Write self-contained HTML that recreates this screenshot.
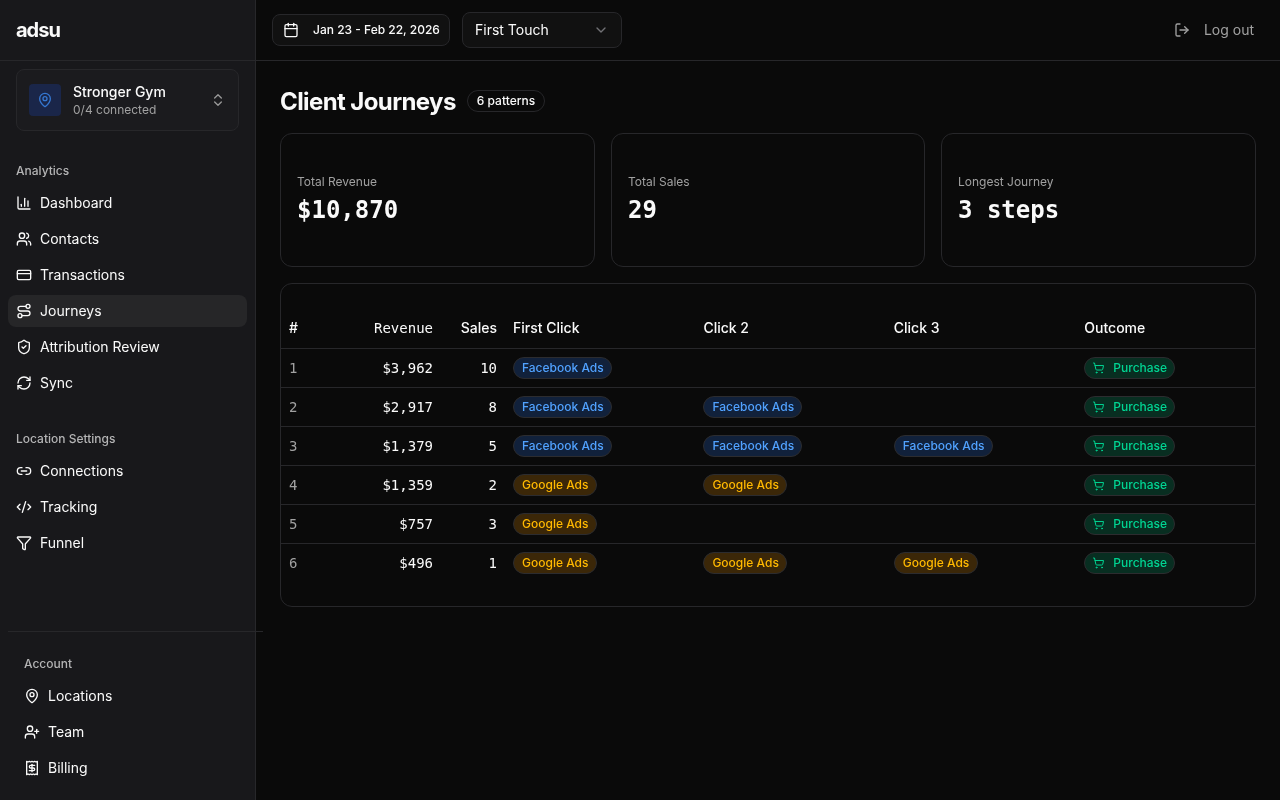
<!DOCTYPE html>
<html lang="en">
<head>
<meta charset="utf-8">
<title>adsu – Client Journeys</title>
<style>
*{box-sizing:border-box;margin:0;padding:0}
html,body{width:1280px;height:800px;overflow:hidden;background:#0a0a0a;color:#fafafa;
  font-family:"Inter","Liberation Sans",sans-serif;font-size:14px;-webkit-font-smoothing:antialiased;font-size-adjust:0.5459}
svg{display:block;fill:none;stroke:currentColor;stroke-width:2;stroke-linecap:round;stroke-linejoin:round}
.mono{font-family:"DejaVu Sans Mono","Liberation Mono",monospace;font-size-adjust:none}
#root{position:absolute;left:0;top:0;width:1280px;height:800px;will-change:transform}
/* sidebar */
#sb{position:absolute;left:0;top:0;width:256px;height:800px;background:#18181b;border-right:1px solid #27272a}
#logo{position:absolute;left:16px;top:16px;height:28px;line-height:28px;font-size:20px;font-weight:700;letter-spacing:-1px}
#sbline{position:absolute;left:0;top:60px;width:255px;height:1px;background:#27272a}
#loc{position:absolute;left:16px;top:69px;width:223px;height:62px;border:1px solid #27272a;border-radius:8px;background:#1b1b1e}
#loc .ic{position:absolute;left:12px;top:14px;width:32px;height:32px;border-radius:4px;background:#1a2649;color:#3578d2;display:flex;align-items:center;justify-content:center}
#loc .t1{position:absolute;left:56px;top:12px;font-size:14px;font-weight:500;line-height:20px;white-space:nowrap}
#loc .t2{position:absolute;left:56px;top:32px;font-size:12px;line-height:16px;color:#a1a1a1;white-space:nowrap}
#loc .ch{position:absolute;left:193px;top:22px;color:#999999}
.lab{position:absolute;font-size:12px;font-weight:500;color:#b4b4b5;line-height:16px;white-space:nowrap}
.it{position:absolute;left:8px;width:239px;height:32px;border-radius:8px;display:flex;align-items:center;padding-left:8px;font-size:14px;line-height:20px;color:#fafafa;white-space:nowrap}
.it svg{width:16px;height:16px;margin-right:8px;flex:none}
.it.act{background:#262628}
.it.b{left:16px;width:223px}
#sep{position:absolute;left:8px;top:631px;width:255px;height:1px;background:#27272a}
/* header */
#hd{position:absolute;left:256px;top:0;width:1024px;height:61px;border-bottom:1px solid #27272a}
#date{position:absolute;left:16px;top:14px;width:178px;height:32px;border:1px solid #27272a;border-radius:8px;background:#111111;display:flex;align-items:center;padding-left:10px;font-size:12px;line-height:16px;font-weight:500;white-space:nowrap}
#date svg{width:16px;height:16px;margin-right:14px}
#sel{position:absolute;left:206px;top:12px;width:160px;height:36px;border:1px solid #27272a;border-radius:8px;background:#111111;display:flex;align-items:center;padding-left:12px;font-size:14px;line-height:20px;white-space:nowrap}
#sel svg{position:absolute;right:12px;top:9px;width:16px;height:16px;color:#717175}
#lo{position:absolute;right:26px;top:14px;height:32px;display:flex;align-items:center;font-size:14px;line-height:20px;color:#a1a1a1;white-space:nowrap}
#lo svg{width:16px;height:16px;margin-right:14px}
/* main */
#title{position:absolute;left:280px;top:86px;font-size:24px;font-weight:700;line-height:32px;letter-spacing:-0.6px;white-space:nowrap}
#pat{position:absolute;left:467px;top:90px;width:78px;height:22px;border:1px solid #27272a;border-radius:11px;font-size:12px;font-weight:500;line-height:16px;padding-top:2px;text-align:center;white-space:nowrap}
.card{position:absolute;top:133px;height:134px;border:1px solid #27272a;border-radius:12px;background:#0a0a0a}
.card .k{position:absolute;left:16px;top:40px;font-size:12px;line-height:16px;color:#a1a1a1;white-space:nowrap}
.card .v{position:absolute;left:16px;top:60px;font-size:24px;font-weight:700;line-height:32px;white-space:nowrap}
#tb{position:absolute;left:280px;top:283px;width:976px;height:324px;border:1px solid #27272a;border-radius:12px}
.row{position:absolute;left:0;width:974px;height:39px;border-top:1px solid #27272a}
.row>*{position:absolute;top:9px;height:20px;line-height:20px;font-size:14px;white-space:nowrap}
.hrow{position:absolute;left:0;top:24px;width:974px;height:40px}
.hrow>*{position:absolute;top:10px;height:20px;line-height:20px;font-size:14px;font-weight:500;white-space:nowrap}
.c0{left:8px;color:#a1a1a1}
.c1{right:822px;text-align:right}
.c2{right:758px;text-align:right}
.c3{left:232px}.c4{left:422.4px}.c5{left:612.8px}.c6{left:803.3px}
.bd{position:absolute;left:0;top:-1px;height:22px;line-height:16px;border-radius:11px;padding:2px 8px;border:1px solid #2c2c2f;font-size:12px;font-weight:500}
.fb{background:#11213b;color:#51a2ff;width:99px}
.ga{background:#3b2708;color:#ffb900;width:84px}
.pu{background:#082e21;color:#00d492;padding-left:28px;width:91px}
.pu svg{position:absolute;left:8px;top:4px;width:12px;height:12px}
</style>
</head>
<body>
<div id="root">
<div id="sb">
  <div id="logo">adsu</div>
  <div id="sbline"></div>
  <div id="loc">
    <div class="ic"><svg width="16" height="16" viewBox="0 0 24 24"><path d="M20 10c0 4.993-5.539 10.193-7.399 11.799a1 1 0 0 1-1.202 0C9.539 20.193 4 14.993 4 10a8 8 0 0 1 16 0"/><circle cx="12" cy="10" r="3"/></svg></div>
    <div class="t1">Stronger Gym</div>
    <div class="t2">0/4 connected</div>
    <div class="ch"><svg width="16" height="16" viewBox="0 0 24 24"><path d="m7 15 5 5 5-5"/><path d="m7 9 5-5 5 5"/></svg></div>
  </div>
  <div class="lab" style="left:16px;top:163px">Analytics</div>
  <div class="it" style="top:187px"><svg viewBox="0 0 24 24"><path d="M3 3v16a2 2 0 0 0 2 2h16"/><path d="M18 17V9"/><path d="M13 17V5"/><path d="M8 17v-3"/></svg>Dashboard</div>
  <div class="it" style="top:223px"><svg viewBox="0 0 24 24"><path d="M16 21v-2a4 4 0 0 0-4-4H6a4 4 0 0 0-4 4v2"/><circle cx="9" cy="7" r="4"/><path d="M22 21v-2a4 4 0 0 0-3-3.87"/><path d="M16 3.13a4 4 0 0 1 0 7.75"/></svg>Contacts</div>
  <div class="it" style="top:259px"><svg viewBox="0 0 24 24"><rect width="20" height="14" x="2" y="5" rx="2"/><line x1="2" x2="22" y1="10" y2="10"/></svg>Transactions</div>
  <div class="it act" style="top:295px"><svg viewBox="0 0 24 24"><circle cx="6" cy="19" r="3"/><path d="M9 19h8.5a3.5 3.5 0 0 0 0-7h-11a3.5 3.5 0 0 1 0-7H15"/><circle cx="18" cy="5" r="3"/></svg>Journeys</div>
  <div class="it" style="top:331px"><svg viewBox="0 0 24 24"><path d="M20 13c0 5-3.5 7.5-7.66 8.95a1 1 0 0 1-.67-.01C7.5 20.5 4 18 4 13V6a1 1 0 0 1 1-1c2 0 4.5-1.2 6.24-2.72a1.17 1.17 0 0 1 1.52 0C14.51 3.81 17 5 19 5a1 1 0 0 1 1 1z"/><path d="m9 12 2 2 4-4"/></svg>Attribution Review</div>
  <div class="it" style="top:367px"><svg viewBox="0 0 24 24"><path d="M3 12a9 9 0 0 1 9-9 9.75 9.75 0 0 1 6.74 2.74L21 8"/><path d="M21 3v5h-5"/><path d="M21 12a9 9 0 0 1-9 9 9.75 9.75 0 0 1-6.74-2.74L3 16"/><path d="M8 16H3v5"/></svg>Sync</div>
  <div class="lab" style="left:16px;top:431px">Location Settings</div>
  <div class="it" style="top:455px"><svg viewBox="0 0 24 24"><path d="M9 17H7A5 5 0 0 1 7 7h2"/><path d="M15 7h2a5 5 0 1 1 0 10h-2"/><line x1="8" x2="16" y1="12" y2="12"/></svg>Connections</div>
  <div class="it" style="top:491px"><svg viewBox="0 0 24 24"><path d="m18 16 4-4-4-4"/><path d="m6 8-4 4 4 4"/><path d="m14.5 4-5 16"/></svg>Tracking</div>
  <div class="it" style="top:527px"><svg viewBox="0 0 24 24"><path d="M10 20a1 1 0 0 0 .553.895l2 1A1 1 0 0 0 14 21v-7a2 2 0 0 1 .517-1.341L21.74 4.67A1 1 0 0 0 21 3H3a1 1 0 0 0-.742 1.67l7.225 7.989A2 2 0 0 1 10 14z"/></svg>Funnel</div>
  <div class="lab" style="left:24px;top:656px">Account</div>
  <div class="it b" style="top:680px"><svg viewBox="0 0 24 24"><path d="M20 10c0 4.993-5.539 10.193-7.399 11.799a1 1 0 0 1-1.202 0C9.539 20.193 4 14.993 4 10a8 8 0 0 1 16 0"/><circle cx="12" cy="10" r="3"/></svg>Locations</div>
  <div class="it b" style="top:716px"><svg viewBox="0 0 24 24"><path d="M16 21v-2a4 4 0 0 0-4-4H6a4 4 0 0 0-4 4v2"/><circle cx="9" cy="7" r="4"/><line x1="19" x2="19" y1="8" y2="14"/><line x1="22" x2="16" y1="11" y2="11"/></svg>Team</div>
  <div class="it b" style="top:752px"><svg viewBox="0 0 24 24"><path d="M4 2v20l2-1 2 1 2-1 2 1 2-1 2 1 2-1 2 1V2l-2 1-2-1-2 1-2-1-2 1-2-1-2 1Z"/><path d="M16 8h-6a2 2 0 1 0 0 4h4a2 2 0 1 1 0 4H8"/><path d="M12 17.5v-11"/></svg>Billing</div>
</div>
<div id="sep"></div>
<div id="hd">
  <div id="date"><svg viewBox="0 0 24 24"><path d="M8 2v4"/><path d="M16 2v4"/><rect width="18" height="18" x="3" y="4" rx="2"/><path d="M3 10h18"/></svg>Jan 23 - Feb 22, 2026</div>
  <div id="sel">First Touch<svg viewBox="0 0 24 24"><path d="m6 9 6 6 6-6"/></svg></div>
  <div id="lo"><svg viewBox="0 0 24 24"><path d="m16 17 5-5-5-5"/><path d="M21 12H9"/><path d="M9 21H5a2 2 0 0 1-2-2V5a2 2 0 0 1 2-2h4"/></svg>Log out</div>
</div>
<div id="title">Client Journeys</div>
<div id="pat">6 patterns</div>
<div class="card" style="left:280px;width:315px"><div class="k">Total Revenue</div><div class="v mono">$10,870</div></div>
<div class="card" style="left:611px;width:314px"><div class="k">Total Sales</div><div class="v mono">29</div></div>
<div class="card" style="left:941px;width:315px"><div class="k">Longest Journey</div><div class="v mono">3 steps</div></div>
<div id="tb">
  <div class="hrow"><span class="c0" style="color:#fafafa">#</span><span class="c1 mono" style="font-weight:400">Revenue</span><span class="c2">Sales</span><span class="c3">First Click</span><span class="c4">Click 2</span><span class="c5">Click 3</span><span class="c6">Outcome</span></div>
  <div class="row" style="top:64px"><span class="c0 mono">1</span><span class="c1 mono">$3,962</span><span class="c2 mono">10</span><span class="c3"><span class="bd fb">Facebook Ads</span></span><span class="c6"><span class="bd pu"><svg viewBox="1 0 24 24"><circle cx="8" cy="21" r="1"/><circle cx="19" cy="21" r="1"/><path d="M2.05 2.05h2l2.66 12.42a2 2 0 0 0 2 1.58h9.78a2 2 0 0 0 1.95-1.57l1.65-7.43H5.12"/></svg>Purchase</span></span></div>
  <div class="row" style="top:103px"><span class="c0 mono">2</span><span class="c1 mono">$2,917</span><span class="c2 mono">8</span><span class="c3"><span class="bd fb">Facebook Ads</span></span><span class="c4"><span class="bd fb">Facebook Ads</span></span><span class="c6"><span class="bd pu"><svg viewBox="1 0 24 24"><circle cx="8" cy="21" r="1"/><circle cx="19" cy="21" r="1"/><path d="M2.05 2.05h2l2.66 12.42a2 2 0 0 0 2 1.58h9.78a2 2 0 0 0 1.95-1.57l1.65-7.43H5.12"/></svg>Purchase</span></span></div>
  <div class="row" style="top:142px"><span class="c0 mono">3</span><span class="c1 mono">$1,379</span><span class="c2 mono">5</span><span class="c3"><span class="bd fb">Facebook Ads</span></span><span class="c4"><span class="bd fb">Facebook Ads</span></span><span class="c5"><span class="bd fb">Facebook Ads</span></span><span class="c6"><span class="bd pu"><svg viewBox="1 0 24 24"><circle cx="8" cy="21" r="1"/><circle cx="19" cy="21" r="1"/><path d="M2.05 2.05h2l2.66 12.42a2 2 0 0 0 2 1.58h9.78a2 2 0 0 0 1.95-1.57l1.65-7.43H5.12"/></svg>Purchase</span></span></div>
  <div class="row" style="top:181px"><span class="c0 mono">4</span><span class="c1 mono">$1,359</span><span class="c2 mono">2</span><span class="c3"><span class="bd ga">Google Ads</span></span><span class="c4"><span class="bd ga">Google Ads</span></span><span class="c6"><span class="bd pu"><svg viewBox="1 0 24 24"><circle cx="8" cy="21" r="1"/><circle cx="19" cy="21" r="1"/><path d="M2.05 2.05h2l2.66 12.42a2 2 0 0 0 2 1.58h9.78a2 2 0 0 0 1.95-1.57l1.65-7.43H5.12"/></svg>Purchase</span></span></div>
  <div class="row" style="top:220px"><span class="c0 mono">5</span><span class="c1 mono">$757</span><span class="c2 mono">3</span><span class="c3"><span class="bd ga">Google Ads</span></span><span class="c6"><span class="bd pu"><svg viewBox="1 0 24 24"><circle cx="8" cy="21" r="1"/><circle cx="19" cy="21" r="1"/><path d="M2.05 2.05h2l2.66 12.42a2 2 0 0 0 2 1.58h9.78a2 2 0 0 0 1.95-1.57l1.65-7.43H5.12"/></svg>Purchase</span></span></div>
  <div class="row" style="top:259px"><span class="c0 mono">6</span><span class="c1 mono">$496</span><span class="c2 mono">1</span><span class="c3"><span class="bd ga">Google Ads</span></span><span class="c4"><span class="bd ga">Google Ads</span></span><span class="c5"><span class="bd ga">Google Ads</span></span><span class="c6"><span class="bd pu"><svg viewBox="1 0 24 24"><circle cx="8" cy="21" r="1"/><circle cx="19" cy="21" r="1"/><path d="M2.05 2.05h2l2.66 12.42a2 2 0 0 0 2 1.58h9.78a2 2 0 0 0 1.95-1.57l1.65-7.43H5.12"/></svg>Purchase</span></span></div>
</div>
</div>
</body>
</html>
